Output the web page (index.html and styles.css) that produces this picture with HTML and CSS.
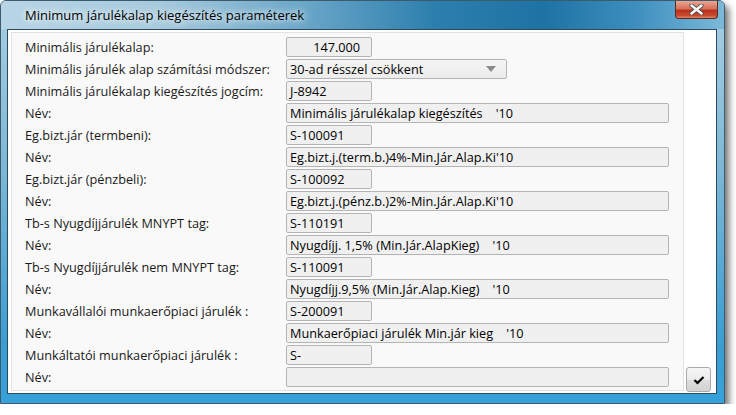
FILE: index.html
```html
<!DOCTYPE html>
<html lang="hu">
<head>
  <meta charset="UTF-8">
  <title>Minimum járulékalap kiegészítés paraméterek</title>
  <link rel="stylesheet" href="styles.css">
</head>
<body>
  <div class="window">
    <div class="titlebar">
      <span class="title">Minimum járulékalap kiegészítés paraméterek</span>
      <button class="close-btn" title="Bezárás">
        <svg width="15" height="11" viewBox="0 0 15 11">
          <path d="M2.5 1.5 L12.5 9.5 M12.5 1.5 L2.5 9.5" stroke="#4a4a4a" stroke-width="4.2" stroke-linecap="round"/>
          <path d="M2.5 1.5 L12.5 9.5 M12.5 1.5 L2.5 9.5" stroke="#ffffff" stroke-width="2.4" stroke-linecap="round"/>
        </svg>
      </button>
    </div>
    <div class="client">
      <div class="panel">
        <label>Minimális járulékalap:</label>
        <div class="field short num">147.000</div>

        <label>Minimális járulék alap számítási módszer:</label>
        <div class="field combo">30-ad résszel csökkent<span class="arrow"></span></div>

        <label>Minimális járulékalap kiegészítés jogcím:</label>
        <div class="field short">J-8942</div>

        <label>Név:</label>
        <div class="field wide">Minimális járulékalap kiegészítés    '10</div>

        <label>Eg.bizt.jár (termbeni):</label>
        <div class="field short">S-100091</div>

        <label>Név:</label>
        <div class="field wide">Eg.bizt.j.(term.b.)4%-Min.Jár.Alap.Ki'10</div>

        <label>Eg.bizt.jár (pénzbeli):</label>
        <div class="field short">S-100092</div>

        <label>Név:</label>
        <div class="field wide">Eg.bizt.j.(pénz.b.)2%-Min.Jár.Alap.Ki'10</div>

        <label>Tb-s Nyugdíjjárulék MNYPT tag:</label>
        <div class="field short">S-110191</div>

        <label>Név:</label>
        <div class="field wide">Nyugdíjj. 1,5% (Min.Jár.AlapKieg)    '10</div>

        <label>Tb-s Nyugdíjjárulék nem MNYPT tag:</label>
        <div class="field short">S-110091</div>

        <label>Név:</label>
        <div class="field wide">Nyugdíjj.9,5% (Min.Jár.Alap.Kieg)    '10</div>

        <label>Munkavállalói munkaerőpiaci járulék :</label>
        <div class="field short">S-200091</div>

        <label>Név:</label>
        <div class="field wide">Munkaerőpiaci járulék Min.jár kieg    '10</div>

        <label>Munkáltatói munkaerőpiaci járulék :</label>
        <div class="field short">S-</div>

        <label>Név:</label>
        <div class="field wide"></div>
      </div>
      <div class="side">
        <button class="ok-btn" title="OK">
          <svg width="12" height="10" viewBox="0 0 12 10">
            <path d="M1.5 5 L4.5 8 L10.5 2" fill="none" stroke="#000" stroke-width="2.2"/>
          </svg>
        </button>
      </div>
    </div>
  </div>
</body>
</html>
```

FILE: styles.css
```css
body {
  margin: 0;
  background-color: #fff;
  font-family: "Open Sans", "Noto Sans", sans-serif;
  font-size: 12.7px;
  color: #1a1a1a;
}
.window {
  width: 725px;
  height: 404px;
  box-sizing: border-box;
  border: 1px solid #3d5a6c;
  border-radius: 6px 6px 0 0;
  background: linear-gradient(to bottom, #a9cfe3 0%, #7fb8d6 40%, #3b9ed2 85%, #36a1da 100%);
  box-shadow: 4px 5px 7px rgba(0, 0, 0, 0.55);
  display: flex;
  flex-direction: column;
}
.titlebar {
  height: 28px;
  display: flex;
  align-items: flex-start;
  border-radius: 5px 5px 0 0;
  background: linear-gradient(to right, #b7d5e5 0%, #a6cadd 22%, #6aa6c8 42%, #2c7fad 60%, #1d73a4 75%, #3e8fbe 88%, #7cb9d9 100%);
}
.title {
  margin: 5px 0 0 24px;
  font-size: 13px;
  color: #000;
  text-shadow: 0 0 6px #fff, 0 0 10px rgba(255, 255, 255, 0.8);
}
.close-btn {
  margin-left: auto;
  margin-right: 6px;
  width: 43px;
  height: 18px;
  padding: 0;
  border: 1px solid #5a2a22;
  border-top: none;
  border-radius: 0 0 4px 4px;
  background: linear-gradient(to bottom, #e8a795 0%, #d8725a 45%, #b8321c 55%, #c94a2e 85%, #e0886a 100%);
  display: flex;
  align-items: center;
  justify-content: center;
}
.client {
  flex: 1;
  margin: 0 7px 9px 6px;
  border: 1px solid #2e4a5c;
  background-color: #fff;
  display: flex;
}
.panel {
  margin: 2px 0 2px 3px;
  width: 673px;
  box-sizing: border-box;
  padding: 4px 0 0 13px;
  border: 1px solid #e2e2e2;
  background-color: #f9f9f9;
  display: grid;
  grid-template-columns: 261px 383px;
  grid-auto-rows: 20px;
  row-gap: 2px;
}
.panel label {
  line-height: 20px;
  white-space: nowrap;
}
.field {
  box-sizing: border-box;
  height: 20px;
  line-height: 18px;
  padding: 0 3px;
  border: 1px solid #b4b4b4;
  border-radius: 2px;
  background-color: #f0f0f0;
  color: #000;
  white-space: pre;
  overflow: hidden;
}
.short {
  width: 86px;
}
.num {
  text-align: right;
  padding-right: 11px;
}
.combo {
  width: 221px;
  position: relative;
  background: linear-gradient(to bottom, #f4f4f4, #ececec);
}
.arrow {
  position: absolute;
  right: 10px;
  top: 6px;
  border-left: 5px solid transparent;
  border-right: 5px solid transparent;
  border-top: 6px solid #8a8a8a;
}
.wide {
  width: 383px;
}
.side {
  flex: 1;
  display: flex;
  align-items: flex-end;
  padding: 0 0 1px 2px;
}
.ok-btn {
  width: 25px;
  height: 25px;
  padding: 0;
  border: 1px solid #a9a9a9;
  border-radius: 3px;
  background: linear-gradient(to bottom, #f6f6f6 0%, #ececec 50%, #dcdcdc 51%, #d4d4d4 100%);
  display: flex;
  align-items: center;
  justify-content: center;
}
```
